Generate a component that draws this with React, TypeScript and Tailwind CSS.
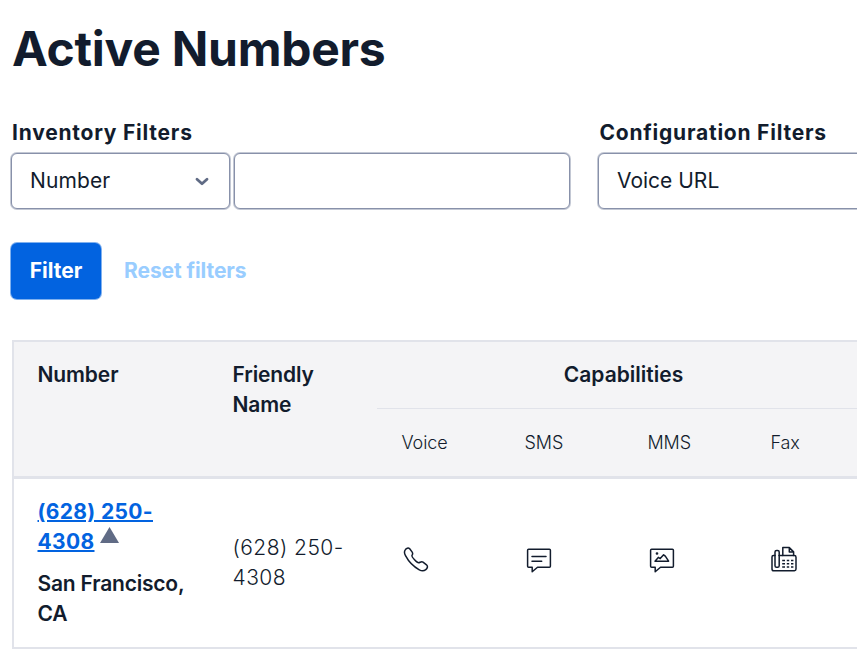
import React from "react";

const stroke = {
  fill: "none",
  stroke: "#121c2d",
  strokeWidth: 1.5,
  strokeLinejoin: "round" as const,
  strokeLinecap: "round" as const,
};

function VoiceIcon() {
  return (
    <svg width="26" height="26" viewBox="0 0 26 26" {...stroke}>
      <path d="M2.2 2.8C3.1 1.3 5.3.3 6.7 1.7L9.2 5.1C10.3 6.8 9.3 7.6 8.9 8.7C8.6 10.2 14 15.7 15.6 15.8C17 15.8 18.2 14 20 15.1L23.5 17.8C25.2 19.3 24.4 21.3 22.8 22.6C20.8 24.2 18.3 23.9 16.3 22.8C11.2 20.1 5.3 14 2.5 8.7C1.4 6.7 1.1 4.5 2.2 2.8Z" />
    </svg>
  );
}

function SmsIcon() {
  return (
    <svg width="26" height="26" viewBox="0 0 26 26" {...stroke}>
      <path d="M2.6 2.2H23.4Q24.4 2.2 24.4 3.2V19.3Q24.4 20.3 23.4 20.3H11.5L6.2 24.8V20.3H2.6Q1.6 20.3 1.6 19.3V3.2Q1.6 2.2 2.6 2.2Z" />
      <path d="M6 9.5H20M6 14.2H15.7" />
    </svg>
  );
}

function MmsIcon() {
  return (
    <svg width="26" height="26" viewBox="0 0 26 26" {...stroke}>
      <path d="M2.6 2.2H23.4Q24.4 2.2 24.4 3.2V19.3Q24.4 20.3 23.4 20.3H11.5L6.2 24.8V20.3H2.6Q1.6 20.3 1.6 19.3V3.2Q1.6 2.2 2.6 2.2Z" />
      <path d="M6 14.2L9.3 10.4L11.2 11.6L14.6 7.8L16.3 9.2L19.6 14.2Z" />
      <circle cx="8" cy="6.5" r="0.6" fill="#121c2d" />
    </svg>
  );
}

function FaxIcon() {
  return (
    <svg width="28" height="28" viewBox="0 0 28 28" {...stroke}>
      <path d="M5 9.6H3.4Q2 9.6 2 11V22.9Q2 24.7 3.8 24.7H24.4Q26 24.7 26 23.1V11.2Q26 9.6 24.4 9.6H9" />
      <rect x="5" y="4.5" width="4.2" height="16.8" rx="1.6" />
      <path d="M12.8 9.6V1.6H19.3L23.6 5.9V9.6M19.3 1.6V5.9H23.6" />
      <path
        d="M12.2 14.5H15M16.8 14.5H19.2M21 14.5H23.4M12.2 17.8H15M16.8 17.8H19.2M21 17.8H23.4M12.2 21H15M16.8 21H19.2M21 21H23.4"
        strokeLinecap="butt"
      />
    </svg>
  );
}

const capabilities = [
  { name: "Voice", icon: <VoiceIcon /> },
  { name: "SMS", icon: <SmsIcon /> },
  { name: "MMS", icon: <MmsIcon /> },
  { name: "Fax", icon: <FaxIcon /> },
];

const field =
  "flex h-[56px] shrink-0 items-center rounded-[6px] border border-[#8891aa] bg-white ring-1 ring-[#8891aa]/50";

export default function App() {
  return (
    <div className="h-[663px] w-[857px] overflow-hidden bg-white pt-[18px] font-['Inter',sans-serif] text-[21px] leading-[30px] text-[#121c2d]">
      <h1 className="pl-[12px] text-[48px] leading-[62px] font-bold tracking-[-0.25px]">
        Active Numbers
      </h1>

      <div className="mt-[38px] flex gap-[28px] pl-[11px]">
        <section className="w-[559px] shrink-0">
          <h2 className="pl-px font-[650] tracking-[0.77px]">Inventory Filters</h2>
          <div className="mt-[5px] flex gap-[4px]">
            <button className={`${field} w-[219px] justify-between pr-[20px] pl-[18px] tracking-[0.1px]`}>
              Number
              <svg width="14" height="9" viewBox="0 0 14 9" fill="none">
                <path
                  d="M2 2.3L7 6.8L12 2.3"
                  stroke="#606b85"
                  strokeWidth="2.8"
                  strokeLinecap="round"
                  strokeLinejoin="round"
                />
              </svg>
            </button>
            <input className={`${field} w-[336px]`} aria-label="Number search" />
          </div>
        </section>
        <section className="w-[560px] shrink-0">
          <h2 className="pl-[1.5px] font-[650] tracking-[0.77px]">Configuration Filters</h2>
          <button className={`${field} mt-[5px] w-[320px] pl-[18px]`}>Voice URL</button>
        </section>
      </div>

      <div className="mt-[34px] flex pl-[11px] font-[650]">
        <button className="h-[56px] w-[90px] rounded-[6px] bg-[#0263e0] text-white ring-1 ring-[#0263e0]/50">
          Filter
        </button>
        <button className="ml-[23px] tracking-[-0.08px] text-[#99cdff]">Reset filters</button>
      </div>

      <div className="mt-[41px] ml-[12px] w-[900px] border-2 border-[#e1e3ea]">
        <div className="flex h-[137px] border-b-[3px] border-[#e1e3ea] bg-[#f4f4f6] font-[580] tracking-[-0.12px]">
          <div className="w-[195px] pt-[18px] pl-[23.5px]">Number</div>
          <div className="w-[168px] pt-[18px] pr-[40px] pl-[23.5px]">Friendly Name</div>
          <div className="w-[492px]">
            <div className="h-[67px] border-b border-[#e1e3ea] pt-[18px] pl-px text-center tracking-[0px]">
              Capabilities
            </div>
            <div className="grid grid-cols-4 pt-[19px] text-[18px] font-light tracking-[-0.1px]">
              {capabilities.map((c) => (
                <div key={c.name} className="pl-[24.5px]">
                  {c.name}
                </div>
              ))}
            </div>
          </div>
        </div>
        <div className="flex h-[168px] items-center">
          <div className="w-[195px] pl-[23.5px]">
            <div className="font-bold tracking-[0.35px]">
              <a href="#" className="text-[#0263e0] underline decoration-2">
                (628) 250-
                <br />
                4308
              </a>
              <svg className="ml-[5.5px] inline-block align-[6px]" width="19" height="16" viewBox="0 0 19 16">
                <path d="M9.5 0L19 16H0Z" fill="#606b85" />
              </svg>
            </div>
            <div className="mt-[12px] font-[580] tracking-[-0.2px]">
              San Francisco,
              <br />
              CA
            </div>
          </div>
          <div className="w-[168px] pl-[23.5px] font-light tracking-[0.45px]">
            (628) 250-
            <br />
            4308
          </div>
          <div className="-mt-[6px] grid w-[492px] grid-cols-4">
            {capabilities.map((c) => (
              <div key={c.name} className="flex h-[28px] items-center pl-[26px] last:pl-[24px]">
                {c.icon}
              </div>
            ))}
          </div>
        </div>
      </div>
    </div>
  );
}
